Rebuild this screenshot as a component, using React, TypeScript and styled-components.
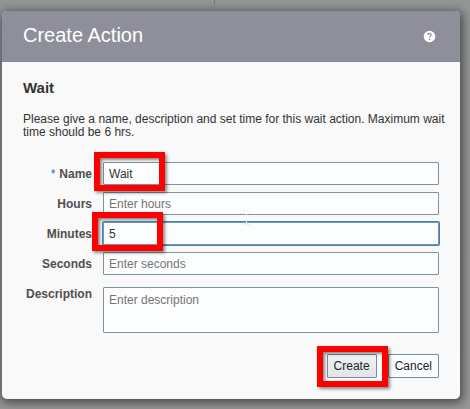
import React from "react";
import styled, { createGlobalStyle, css } from "styled-components";

const GlobalStyle = createGlobalStyle`
  *, *::before, *::after { box-sizing: border-box; }
  body {
    margin: 0;
    background: linear-gradient(#929796 0, #959595 80px, #979797 100%) fixed;
    font-family: "Liberation Sans", Arial, sans-serif;
    font-size: 12px;
    color: #333;
  }
`;

const Page = styled.div`
  position: relative;
  min-height: 100vh;
  padding: 11px 10px 10px 2px;
`;

const PageDivider = styled.div`
  position: absolute;
  top: 0;
  left: 214px;
  width: 1px;
  height: 5px;
  background: #737777;
`;

const Dialog = styled.section`
  border-radius: 5px;
  background: #f9f9f9;
  box-shadow: 1px 2px 10px 2px rgba(0, 0, 0, 0.5);
`;

const Header = styled.header`
  display: flex;
  align-items: center;
  justify-content: space-between;
  height: 51px;
  padding: 0 24px 0 21px;
  border-bottom: 1px solid #7c88a0;
  border-radius: 5px 5px 0 0;
  background: #8e8f9b;
`;

const Title = styled.h1`
  margin: 0;
  padding-bottom: 2px;
  font-size: 20px;
  line-height: 24px;
  font-weight: 400;
  color: #fff;
`;

const HelpButton = styled.button`
  display: flex;
  padding: 0;
  border: 0;
  background: none;
  cursor: pointer;
`;

const Body = styled.form`
  display: flex;
  flex-direction: column;
  padding: 17px 21px 21px;
`;

const Heading = styled.h2`
  margin: 0 0 16px;
  font-size: 15px;
  line-height: 18px;
  font-weight: 700;
`;

const Intro = styled.p`
  margin: 0 -12px 23px 0;
  line-height: 13px;
`;

const Fields = styled.div`
  display: flex;
  flex-direction: column;
  gap: 7px;
`;

const Field = styled.div<{ $tall?: boolean }>`
  display: grid;
  grid-template-columns: 69px 1fr;
  column-gap: 11px;
  align-items: ${(p) => (p.$tall ? "start" : "center")};
  margin-top: ${(p) => (p.$tall ? "5px" : "0")};
`;

const Label = styled.label`
  text-align: right;
  line-height: 14px;
  font-weight: 700;
  color: #4f4f4f;
  white-space: nowrap;
`;

const Required = styled.span`
  margin-right: 4px;
  font-weight: 400;
  color: #0572ce;
`;

const Control = styled.div`
  position: relative;
  display: flex;
`;

const controlStyle = css`
  width: 100%;
  min-width: 0;
  margin: 0;
  border: 1px solid #7d94a1;
  border-radius: 1px;
  background: #fcfdfe;
  color: #333;
  font: inherit;
  outline: none;
  &::placeholder { color: #757575; opacity: 1; }
`;

const TextInput = styled.input<{ $active?: boolean }>`
  ${controlStyle}
  height: 23px;
  padding: 0 5px;
  ${(p) => p.$active && "box-shadow: 0 0 0 1px #3b82d2;"}
`;

const TextArea = styled.textarea`
  ${controlStyle}
  height: 46px;
  padding: 5px;
  line-height: 14px;
  resize: none;
`;

const Actions = styled.div`
  display: flex;
  justify-content: flex-end;
  gap: 11px;
  margin-top: 21px;
`;

const Button = styled.button<{ $primary?: boolean }>`
  height: 24px;
  padding: 0 6px;
  border: 1px solid #748da0;
  border-radius: 1px;
  background: ${(p) => (p.$primary ? "linear-gradient(#f0f1f2, #e2e5e7)" : "#fbfcfd")};
  color: #222;
  font: inherit;
  cursor: pointer;
`;

const Callout = styled.span<{ $top: number; $left: number; $height: number }>`
  position: absolute;
  z-index: 1;
  top: ${(p) => p.$top}px;
  left: ${(p) => p.$left}px;
  width: 71px;
  height: ${(p) => p.$height}px;
  border: 6px solid #fe0000;
  box-shadow: 2px 2px 3px rgba(0, 0, 0, 0.45), inset 2px 2px 3px rgba(0, 0, 0, 0.45);
  pointer-events: none;
`;

const TextCursor = styled.svg`
  position: absolute;
  z-index: 1;
  top: 17px;
  left: 139px;
  pointer-events: none;
`;

export default function App() {
  return (
    <>
      <GlobalStyle />
      <Page>
        <PageDivider />
        <Dialog role="dialog" aria-labelledby="dialog-title">
          <Header>
            <Title id="dialog-title">Create Action</Title>
            <HelpButton type="button" aria-label="Help">
              <svg width="13" height="13" viewBox="0 0 13 13" fill="none">
                <circle cx="6.5" cy="6.5" r="5.8" fill="#fff" />
                <path
                  d="M4.9 5.1C4.9 3.9 5.6 3.3 6.6 3.3S8.2 3.9 8.2 4.8C8.2 6 6.6 6 6.6 7.6"
                  stroke="#8e8f9b"
                  strokeWidth="1.2"
                />
                <circle cx="6.6" cy="9.4" r="0.8" fill="#8e8f9b" />
              </svg>
            </HelpButton>
          </Header>
          <Body onSubmit={(e) => e.preventDefault()}>
            <Heading>Wait</Heading>
            <Intro>
              Please give a name, description and set time for this wait action. Maximum wait time
              should be 6 hrs.
            </Intro>
            <Fields>
              <Field>
                <Label htmlFor="name">
                  <Required>*</Required>Name
                </Label>
                <Control>
                  <TextInput id="name" defaultValue="Wait" required />
                  <Callout $top={-10} $left={-9} $height={39} />
                </Control>
              </Field>
              <Field>
                <Label htmlFor="hours">Hours</Label>
                <Control>
                  <TextInput id="hours" placeholder="Enter hours" />
                  <TextCursor width="9" height="17" viewBox="0 0 9 17" fill="none">
                    <path d="M1 1.5H4M5 1.5H8M1 15.5H4M5 15.5H8" stroke="#eceeee" />
                    <path d="M4.5 2V15" stroke="#f4f4f4" />
                  </TextCursor>
                </Control>
              </Field>
              <Field>
                <Label htmlFor="minutes">Minutes</Label>
                <Control>
                  <TextInput id="minutes" defaultValue="5" $active />
                  <Callout $top={-10} $left={-11} $height={39} />
                </Control>
              </Field>
              <Field>
                <Label htmlFor="seconds">Seconds</Label>
                <Control>
                  <TextInput id="seconds" placeholder="Enter seconds" />
                </Control>
              </Field>
              <Field $tall>
                <Label htmlFor="description">Description</Label>
                <Control>
                  <TextArea id="description" placeholder="Enter description" />
                </Control>
              </Field>
            </Fields>
            <Actions>
              <Control>
                <Button type="submit" $primary>
                  Create
                </Button>
                <Callout $top={-8} $left={-10} $height={41} />
              </Control>
              <Button type="button">Cancel</Button>
            </Actions>
          </Body>
        </Dialog>
      </Page>
    </>
  );
}
